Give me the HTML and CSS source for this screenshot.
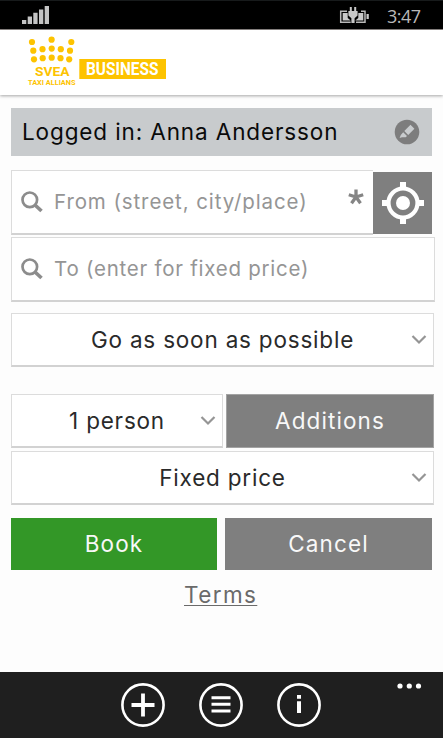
FILE: index.html
```html
<!DOCTYPE html>
<html lang="en">
<head>
<meta charset="utf-8">
<title>Svea Taxi Allians Business</title>
<link rel="stylesheet" href="styles.css">
</head>
<body>
<div class="status">
  <svg class="signal" width="28" height="18" viewBox="0 0 28 18" fill="#c4c4c4"><path d="M0 14h4.300v4H0zM5.700 10.500h4.300V18H5.700zM11.300 6.700h4.300V18h-4.300zM17 3.500h4.300V18H17zM22.700 0H27v18h-4.300z"/></svg>
  <svg class="battery" width="31" height="18" viewBox="339 6 31 18"><path d="M347 11.200h-6.300v11h10M361 11.200h4v11h-9" fill="none" stroke="#b9b9b9" stroke-width="1.500"/><path d="M342.700 13h5v5l3 2.500h-8zM363.300 13h-5v5l-3 2.500h8zM366.500 14h2.300v5h-2.300zM349.800 7h2v4h2.400V7h2v4h1.400v4.500l-3 2.700V23h-3.200v-4.800l-3-2.700V11h1.400z" fill="#c8c8c8"/></svg>
  <span class="clock">3:47</span>
</div>
<header class="header">
  <svg class="logo" width="150" height="56" viewBox="20 32 150 56" fill="#fdc300">
    <circle cx="32" cy="42" r="3.100"/><circle cx="51.600" cy="39.700" r="3.100"/><circle cx="71.300" cy="42" r="3.100"/>
    <circle cx="33.300" cy="50.700" r="3.100"/><circle cx="42.500" cy="49.200" r="3.100"/><circle cx="51.700" cy="48.600" r="3.100"/><circle cx="60.800" cy="49.200" r="3.100"/><circle cx="70" cy="50.700" r="3.100"/>
    <circle cx="34" cy="59.300" r="3.100"/><circle cx="42.700" cy="58.200" r="3.100"/><circle cx="51.700" cy="57.700" r="3.100"/><circle cx="60.500" cy="58.200" r="3.100"/><circle cx="69.200" cy="59.300" r="3.100"/>
    <text class="brand" x="35" y="76" textLength="34.500" lengthAdjust="spacingAndGlyphs">SVEA</text>
    <text class="sub" x="28" y="84.800" textLength="47.500" lengthAdjust="spacingAndGlyphs">TAXI ALLIANS</text>
    <path d="M79.300 59H166v20H79.300z"/>
    <text class="business" x="86" y="75" textLength="72.500" lengthAdjust="spacingAndGlyphs">BUSINESS</text>
  </svg>
</header>
<main class="main">
  <div class="login">
    <span class="t-login">Logged in: Anna Andersson</span>
    <svg width="26" height="26" viewBox="0 0 26 26"><circle cx="13" cy="13" r="12.300" fill="#7d7d7d"/><path d="M10.300 12l6.200-6.200 3.900 3.900-6.200 6.200zM9.200 13.200l3.800 3.800-1.300 1.200H8l-2.400.7 1.200-2.900z" fill="#c9ccce"/></svg>
  </div>
  <div class="from-row">
    <label class="field from">
      <svg width="22" height="22" viewBox="0 0 22 22" fill="none" stroke="#8c8c8c"><circle cx="8.800" cy="8.800" r="7.300" stroke-width="2.700"/><path d="M14 14l6.500 6" stroke-width="3.700"/></svg>
      <span class="t-from">From (street, city/place)</span>
      <svg class="star" width="16" height="16" viewBox="-8 -8 16 16" stroke="#858585" stroke-width="3.300"><path d="M0 0V-7.500M0 0L7.200-2.300M0 0L4.500 6.200M0 0L-4.500 6.200M0 0L-7.200-2.300"/></svg>
    </label>
    <button class="locate"><svg width="42" height="42" viewBox="-21 -21 42 42"><circle r="14.500" fill="none" stroke="#fff" stroke-width="4.200"/><circle r="7" fill="#fff"/><path d="M-3-21h6v6h-6zM-3 15h6v6h-6zM-21-3h6v6h-6zM15-3h6v6h-6z" fill="#fff"/></svg></button>
  </div>
  <label class="field to">
    <svg width="22" height="22" viewBox="0 0 22 22" fill="none" stroke="#8c8c8c"><circle cx="8.800" cy="8.800" r="7.300" stroke-width="2.700"/><path d="M14 14l6.500 6" stroke-width="3.700"/></svg>
    <span class="t-to">To (enter for fixed price)</span>
  </label>
  <div class="select when"><span class="t-when">Go as soon as possible</span><svg class="chev" width="16" height="12" viewBox="0 0 16 12"><path d="M1.500 2L8 8.500 14.500 2"/></svg></div>
  <div class="pair">
    <div class="select person"><span class="t-person">1 person</span><svg class="chev" width="16" height="12" viewBox="0 0 16 12"><path d="M1.500 2L8 8.500 14.500 2"/></svg></div>
    <button class="btn additions"><span class="t-additions">Additions</span></button>
  </div>
  <div class="select price"><span class="t-price">Fixed price</span><svg class="chev" width="16" height="12" viewBox="0 0 16 12"><path d="M1.500 2L8 8.500 14.500 2"/></svg></div>
  <div class="actions">
    <button class="btn book"><span class="t-book">Book</span></button>
    <button class="btn cancel"><span class="t-cancel">Cancel</span></button>
  </div>
  <a class="terms">Terms</a>
</main>
<footer class="appbar">
  <svg width="44" height="44" viewBox="-22 -22 44 44"><circle class="ring" r="20.600"/><path d="M-1.900-11.500h3.800v9.600h9.600v3.800H1.900v9.600h-3.800V1.900h-9.600v-3.800h9.600z"/></svg>
  <svg width="44" height="44" viewBox="-22 -22 44 44"><circle class="ring" r="20.600"/><path d="M-9.500-8.700h19v3h-19zM-9.500-2.200h19v3h-19zM-9.500 4.500h19v3h-19z"/></svg>
  <svg width="44" height="44" viewBox="-22 -22 44 44"><circle class="ring" r="20.600"/><path d="M-2-10h4v3.700h-4zM-2-3.700h4V8h-4z"/></svg>
  <svg class="more" width="26" height="6" viewBox="0 0 26 6"><circle cx="3" cy="3" r="2.600"/><circle cx="12.300" cy="3" r="2.600"/><circle cx="21.500" cy="3" r="2.600"/></svg>
</footer>
</body>
</html>
```
FILE: styles.css
```css
* { box-sizing: border-box; }
body {
  margin: 0;
  width: 443px;
  height: 738px;
  display: flex;
  flex-direction: column;
  overflow: hidden;
  background: #fdfdfd;
  font: 400 22.500px/26px Inter, "Open Sans", sans-serif;
  color: #2a2a2a;
}
svg { display: block; flex: none; }
button { border: 0; padding: 0; font: inherit; color: inherit; }
span { white-space: nowrap; }

.status {
  height: 30px;
  flex: none;
  display: flex;
  align-items: flex-start;
  background: #000;
  border-top: 1px solid #171a1b;
  border-bottom: 1px solid #8c8684;
  padding: 5px 0 0 22px;
}
.battery { margin-left: 289px; }
.clock {
  font: 400 18px/20px "Open Sans", sans-serif;
  color: #b9b9b9;
  margin-left: 17px;
  letter-spacing: -0.5px;
}
.header {
  height: 65px;
  flex: none;
  background: #fff;
  padding: 2px 0 0 20px;
  box-shadow: 0 1px 3px rgba(0, 0, 0, .35);
}
.logo { overflow: visible; }
.brand { font: 700 12.500px Roboto, sans-serif; }
.sub { font: 700 7px Roboto, sans-serif; }
.business { font: 700 17.800px Roboto, sans-serif; fill: #fff; }

.main {
  flex: 1;
  display: flex;
  flex-direction: column;
  padding: 13px 9px 0 11px;
}
.login {
  height: 48px;
  width: 421px;
  display: flex;
  align-items: center;
  justify-content: space-between;
  background: #c8cbcd;
  color: #0a0a0a;
  padding: 0 12px 0 11px;
}
.from-row { display: flex; margin-top: 14px; height: 65px; align-items: center; }
.field {
  height: 65px;
  display: flex;
  align-items: center;
  gap: 11px;
  padding: 0 9px;
  background: #fff;
  border: 1px solid #dcdcdc;
  border-bottom: 2px solid #d2d2d2;
  color: #959595;
  font-size: 20.500px;
}
.from { width: 362px; border-right: 0; }
.star { margin: -11px 0 0 auto; overflow: visible; }
.locate {
  width: 59px;
  height: 62px;
  background: #7f7f7f;
  display: grid;
  place-items: center;
}
.to { width: 424px; margin-top: 2px; }
.select {
  position: relative;
  height: 54px;
  display: grid;
  place-items: center;
  background: #fff;
  border: 1px solid #dcdcdc;
  border-bottom: 2px solid #d2d2d2;
}
.chev {
  position: absolute;
  right: 6px;
  top: 20px;
  fill: none;
  stroke: #959595;
  stroke-width: 2.200;
}
.when, .price { width: 423px; }
.when { margin-top: 11px; }
.pair { display: flex; gap: 3px; margin-top: 27px; }
.person { width: 212px; }
.price { margin-top: 3px; }
.btn { display: grid; place-items: center; color: #f8f8f8; background: #7f7f7f; }
.additions { width: 208px; height: 54px; border: 1px solid #a3a3a3; }
.actions { display: flex; gap: 8px; margin-top: 13px; }
.book, .cancel { height: 52px; width: 207px; }
.book { width: 206px; background: #339727; }
.terms {
  align-self: flex-start;
  margin: 12px 0 0 173px;
  color: #6a6a6a;
  text-decoration: underline;
  text-decoration-thickness: 1px;
  text-underline-offset: 2px;
}

.t-login { letter-spacing: .88px; }
.t-from { letter-spacing: .9px; }
.t-to { letter-spacing: .75px; }
.t-when, .t-person, .t-price { letter-spacing: .8px; }
.t-additions, .t-book, .t-cancel { letter-spacing: 1.100px; }
.terms { letter-spacing: 1.400px; }

.appbar {
  height: 66px;
  flex: none;
  display: flex;
  gap: 34px;
  align-items: flex-start;
  background: #1f1f1f;
  padding: 11px 0 0 121px;
  fill: #fff;
}
.ring { fill: none; stroke: #fff; stroke-width: 2.600; }
.more { margin-left: 42px; }
```
